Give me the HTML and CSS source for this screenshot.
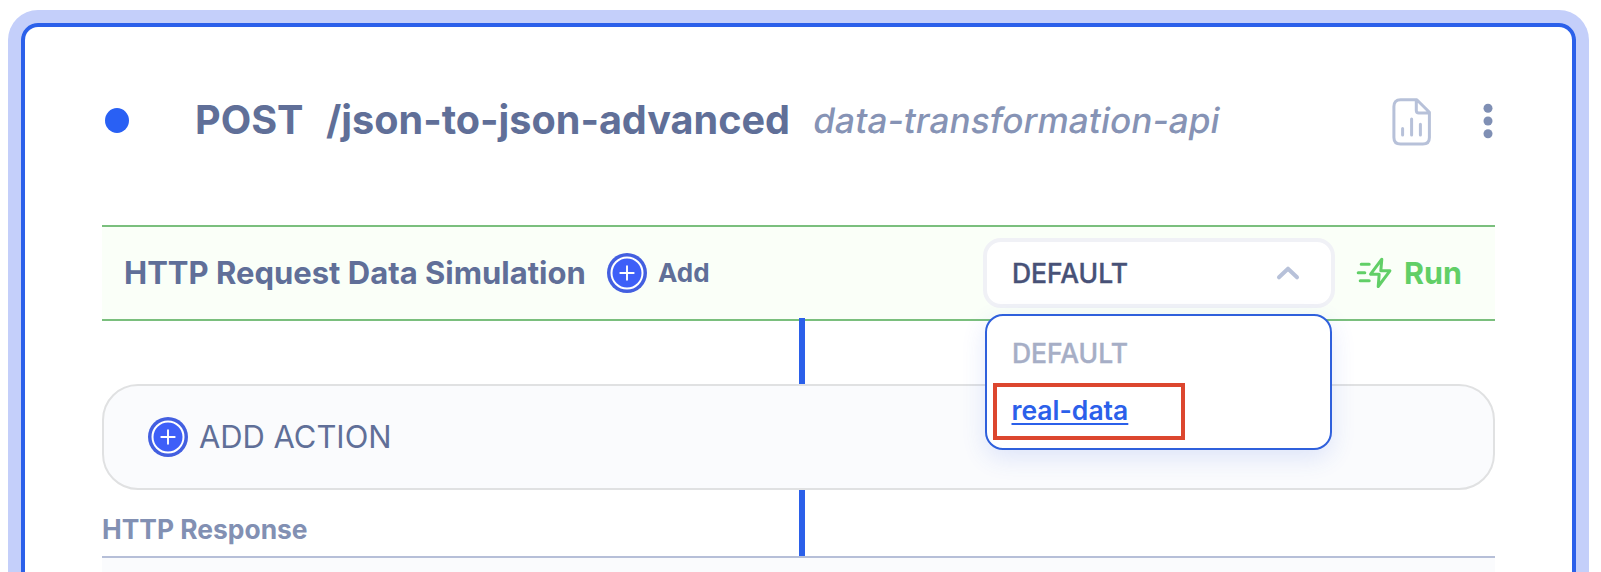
FILE: index.html
```html
<!DOCTYPE html>
<html lang="en">
<head>
<meta charset="utf-8">
<title>POST /json-to-json-advanced</title>
<link rel="stylesheet" href="styles.css">
</head>
<body>
<main class="card">
  <header class="header">
    <span class="status"></span>
    <h1 class="route"><span class="method">POST</span><span class="path">/json-to-json-advanced</span></h1>
    <em class="project">data-transformation-api</em>
    <svg class="report" width="40" height="48" viewBox="0 0 40 48" fill="none" stroke="#b7c1d9" stroke-width="3" stroke-linecap="round" stroke-linejoin="round">
      <path d="M24.8 1.8H8.5Q1.9 1.8 1.9 8.5V39.5Q1.9 46 8.5 46H30.8Q37.4 46 37.4 39.5V14.2ZM24.3 2.5V12.5Q24.3 15 26.8 15H37"/>
      <path d="M10.6 30.5V37M19.6 21V37M28.4 26.3V37"/>
    </svg>
    <svg class="kebab" width="10" height="36" viewBox="0 0 10 36" fill="#7f8fb4"><circle cx="5" cy="5.2" r="4.5"/><circle cx="5" cy="18" r="4.5"/><circle cx="5" cy="30.8" r="4.5"/></svg>
  </header>

  <section class="simulation">
    <h2 class="sim-title">HTTP Request Data Simulation</h2>
    <svg class="plus" width="40" height="40" viewBox="0 0 40 40" fill="none"><circle cx="20" cy="20" r="20" fill="#435fe0"/><circle cx="20" cy="20" r="15.5" fill="#3e5ff8" stroke="#fff" stroke-width="2"/><path d="M20 13.3V26.7M13.3 20H26.7" stroke="#fff" stroke-width="1.9" stroke-linecap="round"/></svg>
    <span class="add">Add</span>
    <div class="select">
      <span class="value">DEFAULT</span>
      <svg width="24" height="16" viewBox="0 0 24 16" fill="none" stroke="#b7c1d9" stroke-width="4" stroke-linecap="round" stroke-linejoin="round"><path d="M3 12.3 12 3.7 21 12.3"/></svg>
      <div class="menu">
        <span class="option disabled">DEFAULT</span>
        <a class="option link">real-data</a>
        <span class="marker"></span>
      </div>
    </div>
    <svg class="bolt" width="36" height="32" viewBox="0 0 36 32" fill="none" stroke="#61cf67" stroke-width="3" stroke-linecap="round" stroke-linejoin="round">
      <path d="M25.8 2.2 14.6 17.2H23.2L22.2 29.5 33.9 13.8H24.8Z"/>
      <path d="M5.2 7.3H13.2M2.2 15.7H8.8M4.2 23.8H13.2"/>
    </svg>
    <span class="run">Run</span>
  </section>

  <div class="connector first"></div>
  <section class="action">
    <svg class="plus" width="40" height="40" viewBox="0 0 40 40" fill="none"><circle cx="20" cy="20" r="20" fill="#435fe0"/><circle cx="20" cy="20" r="15.5" fill="#3e5ff8" stroke="#fff" stroke-width="2"/><path d="M20 13.3V26.7M13.3 20H26.7" stroke="#fff" stroke-width="1.9" stroke-linecap="round"/></svg>
    <span class="action-label">ADD ACTION</span>
  </section>
  <div class="response-head">
    <h3 class="response-title">HTTP Response</h3>
    <div class="connector"></div>
  </div>
  <section class="response"></section>
</main>
</body>
</html>
```
FILE: styles.css
```css
* { box-sizing: border-box; }
html { overflow: hidden; }
body { margin: 0; height: 572px; overflow: hidden; background: #fff; font-family: Inter, "Liberation Sans", sans-serif; display: flow-root; }
h1, h2, h3 { margin: 0; }
.card { width: 1555px; height: 549px; margin: 23px 0 0 21px; padding: 0 77px; border: 4px solid #2b60ea; border-bottom: 0; border-radius: 17px 17px 0 0; box-shadow: 0 0 0 13px #c4cffa; }
.header { height: 187px; margin-bottom: 11px; display: flex; align-items: center; white-space: nowrap; }
.status { width: 24px; height: 25px; margin-left: 3px; border-radius: 50%; background: #2960f4; }
.route { width: 597px; margin: 0 0 1px 66px; display: flex; font-size: 39.6px; line-height: 48px; font-weight: 700; color: #606f98; }
.method { width: 131px; }
.project { margin: 0 0 2px 22px; font-size: 35px; line-height: 42px; font-style: normal; font-weight: 500; letter-spacing: .16px; color: #8693b5; transform: skewX(-9.5deg); }
.report { margin: 2px 0 0 auto; }
.kebab { margin: 0 2px 0 51px; }
.simulation { height: 96px; display: flex; align-items: center; background: #fafff8; border: solid #7abf7d; border-width: 2px 0; white-space: nowrap; }
.sim-title { width: 461px; margin-left: 22px; font-size: 31px; line-height: 38px; font-weight: 700; color: #606f98; }
.plus { flex: none; }
.simulation .plus { margin-left: 22px; }
.add { margin-left: 11px; font-size: 26px; line-height: 32px; font-weight: 700; color: #606f98; }
.select { position: relative; z-index: 2; width: 352px; height: 70px; margin-left: auto; padding: 0 31px 0 25px; display: flex; align-items: center; justify-content: space-between; background: #fff; border: 4px solid #f0f1f6; border-radius: 18px; font-size: 26.5px; line-height: 32px; font-weight: 500; color: #475177; }
.value, .disabled { -webkit-text-stroke: .35px currentColor; }
.menu { position: absolute; left: -2px; top: 72px; width: 347px; height: 136px; padding: 8px 25px; display: flex; flex-direction: column; align-items: flex-start; background: #fff; border: 2px solid #2f60dc; border-radius: 18px; box-shadow: 0 8px 24px rgba(50, 90, 230, .14); }
.option { line-height: 58px; }
.disabled { color: #a6aec6; }
.link { margin: -1px 0 0 -.5px; font-weight: 600; color: #2b60ea; text-decoration: underline; text-decoration-thickness: 2px; text-underline-offset: 3px; }
.marker { position: absolute; left: 6px; top: 67px; width: 192px; height: 57px; border: 4px solid #dc462e; }
.bolt { margin-left: 21px; }
.run { width: 91px; margin-left: 12px; font-size: 30.5px; line-height: 38px; font-weight: 700; color: #61cf67; }
.connector { width: 6px; height: 66px; margin-left: 697px; background: #2b60ea; }
.connector.first { margin-top: -3px; }
.action { height: 106px; padding-left: 44px; display: flex; align-items: center; background: #fafbfd; border: 2px solid #e0e1e2; border-radius: 36px; }
.action-label { margin-left: 11px; font-size: 30.9px; line-height: 38px; font-weight: 400; color: #606f98; }
.response-head { height: 66px; display: flex; }
.response-title { width: 697px; margin-top: 24px; font-size: 26.4px; line-height: 31px; font-weight: 700; color: #8290b3; }
.response-head .connector { margin-left: 0; }
.response { height: 16px; background: #fafbfd; border-top: 2px solid #b6bfd8; }
```
